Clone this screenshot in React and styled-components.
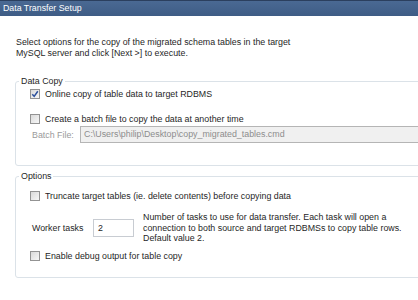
import React from 'react'
import styled, { createGlobalStyle } from 'styled-components'

const Global = createGlobalStyle`
  html, body {
    margin: 0;
    padding: 0;
    background: #fff;
  }
  body {
    font-family: "Liberation Sans", Arial, sans-serif;
    font-size: 8.85px;
    color: #1f1f1f;
    overflow: hidden;
  }
`

function CheckBox({ checked }) {
    return (
        <Box>
            {checked &&
                <svg width="8" height="8" viewBox="0 0 8 8">
                    <path d="M1.3 4.2 L3.2 6.4 L6.8 1.2" fill="none" stroke="#2a4f9c" strokeWidth="1.5" />
                </svg>
            }
        </Box>
    )
}

function Option({ checked, top, children }) {
    return (
        <CheckRow top={top}>
            <CheckBox checked={checked} />
            <span>{children}</span>
        </CheckRow>
    )
}

export default function App() {
    return (
        <>
            <Global />
            <Page>
                <TitleBar>Data Transfer Setup</TitleBar>
                <Intro>
                    Select options for the copy of the migrated schema tables in the target<br />
                    MySQL server and click [Next &gt;] to execute.
                </Intro>

                <Group top={17} bottom={22}>
                    <Legend>Data Copy</Legend>
                    <Option checked top={2}>Online copy of table data to target RDBMS</Option>
                    <Option top={13}>Create a batch file to copy the data at another time</Option>
                    <FieldRow top={1}>
                        <MutedLabel>Batch File:</MutedLabel>
                        <PathInput>C:\Users\philip\Desktop\copy_migrated_tables.cmd</PathInput>
                    </FieldRow>
                </Group>

                <Group top={5} bottom={15}>
                    <Legend>Options</Legend>
                    <Option top={9}>Truncate target tables (ie. delete contents) before copying data</Option>
                    <WorkerRow>
                        <WorkerLabel>Worker tasks</WorkerLabel>
                        <NumberInput>2</NumberInput>
                        <Hint>
                            Number of tasks to use for data transfer. Each task will open a<br />
                            connection to both source and target RDBMSs to copy table rows.<br />
                            Default value 2.
                        </Hint>
                    </WorkerRow>
                    <Option top={6}>Enable debug output for table copy</Option>
                </Group>
            </Page>
        </>
    )
}

const Page = styled.div`
    width: 418px;
    height: 300px;
    overflow: hidden;
`
const TitleBar = styled.div`
    height: 16px;
    box-sizing: border-box;
    border-top: 1px solid #2b3f5e;
    background: linear-gradient(#4a6993, #3e5c85);
    color: #fff;
    font-size: 8.8px;
    line-height: 15px;
    padding-left: 3px;
`
const Intro = styled.div`
    margin: 21px 0 0 16px;
    line-height: 11px;
`
const Group = styled.fieldset`
    margin: ${p => p.top}px -20px 0 15px;
    padding: 0 0 ${p => p.bottom}px 14px;
    min-width: 0;
    border: 1px solid #dbe2e8;
    border-radius: 3px;
`
const Legend = styled.legend`
    padding: 0 2px;
    margin-left: -11px;
    line-height: 10px;
`
const CheckRow = styled.div`
    display: flex;
    align-items: center;
    gap: 5px;
    height: 12px;
    margin-top: ${p => p.top}px;
`
const Box = styled.span`
    width: 10px;
    height: 10px;
    box-sizing: border-box;
    border: 1px solid #939393;
    background: linear-gradient(135deg, #dadada, #f7f7f7);
    display: flex;
    align-items: center;
    justify-content: center;
    flex: none;
`
const FieldRow = styled.div`
    display: flex;
    align-items: center;
    margin-top: ${p => p.top}px;
`
const MutedLabel = styled.span`
    color: #9a9a9a;
    width: 48px;
    padding-left: 2px;
    flex: none;
`
const PathInput = styled.div`
    flex: 1;
    height: 17px;
    box-sizing: border-box;
    border: 1px solid #b5b5b5;
    background: #f0f0f0;
    color: #8d8d8d;
    padding-left: 3px;
    line-height: 15px;
`
const WorkerRow = styled.div`
    display: flex;
    align-items: center;
    margin-top: 10px;
    height: 32px;
`
const WorkerLabel = styled.span`
    width: 61px;
    padding-left: 2px;
    flex: none;
`
const NumberInput = styled.div`
    width: 41px;
    height: 18px;
    box-sizing: border-box;
    border: 1px solid #c8ccd2;
    background: #fff;
    padding-left: 4px;
    line-height: 16px;
    flex: none;
`
const Hint = styled.div`
    margin-left: 9px;
    line-height: 10.5px;
`
